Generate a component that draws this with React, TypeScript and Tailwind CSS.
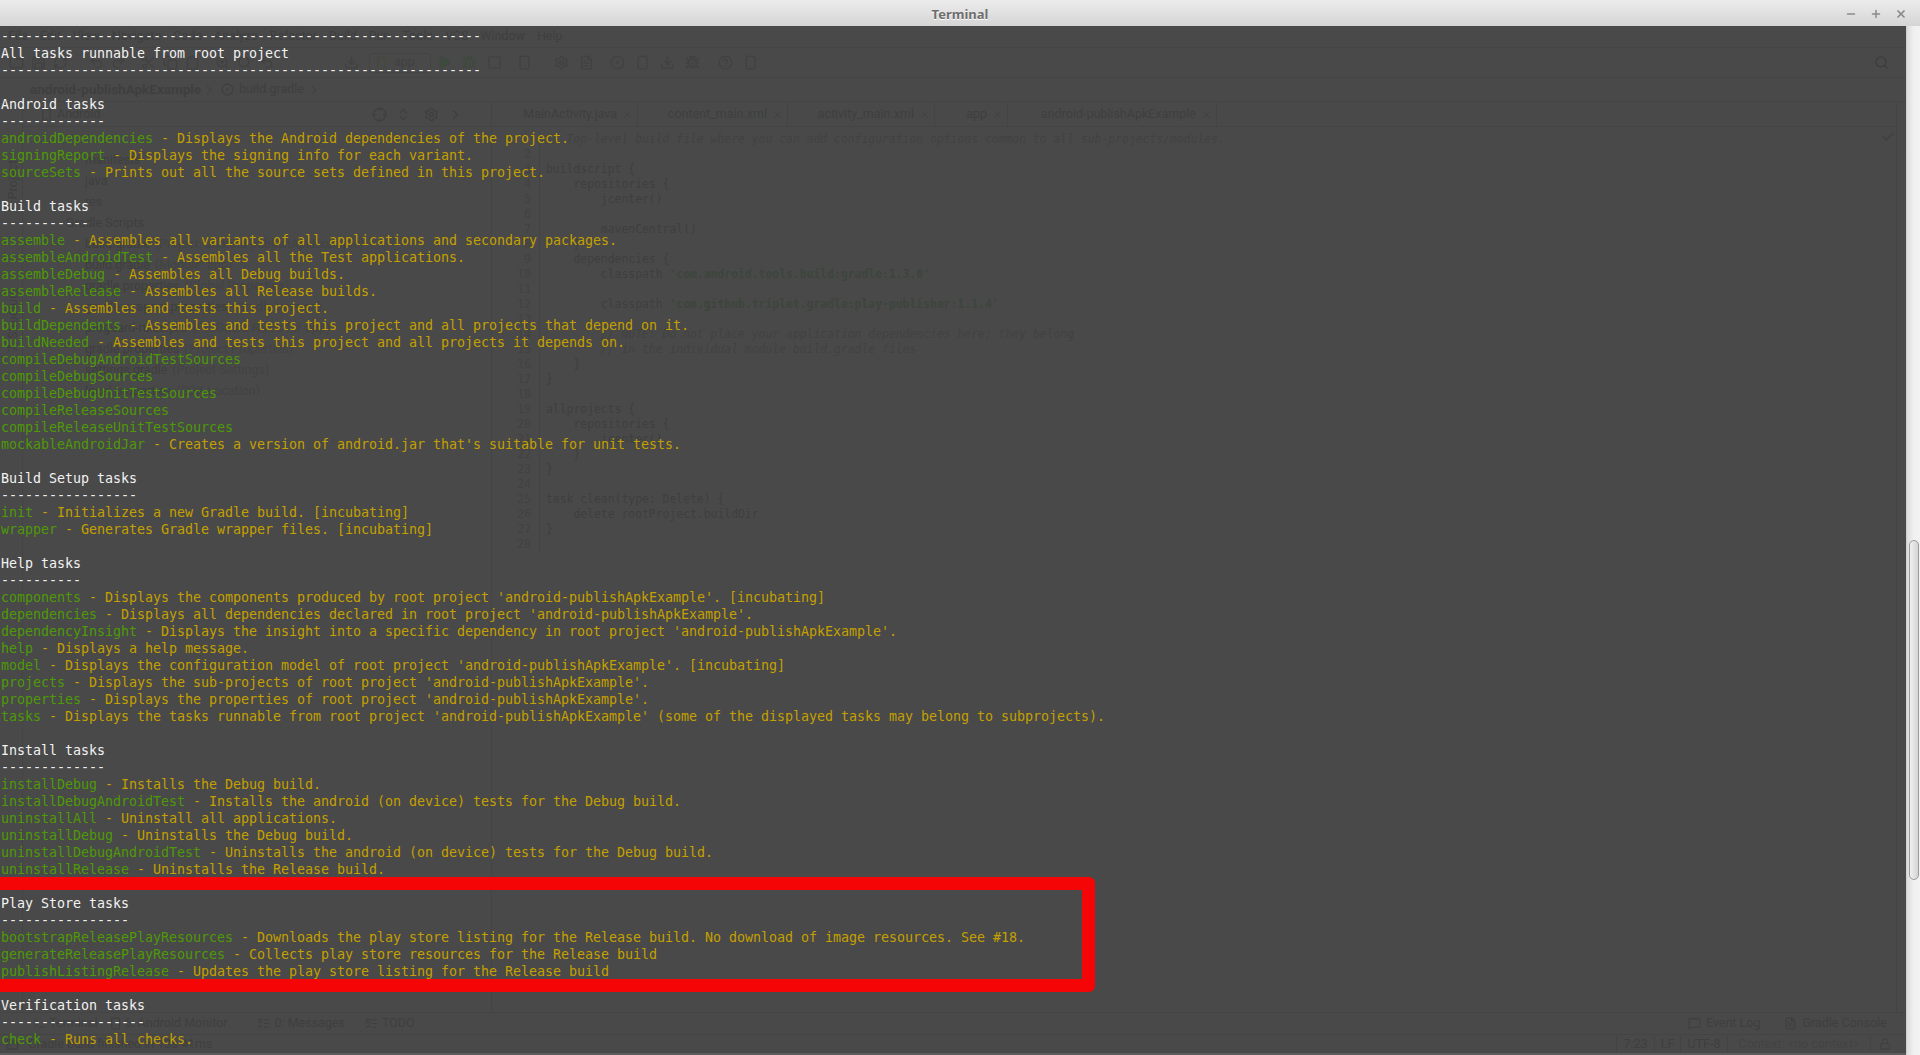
import { Minus, Plus, X, Search, Check, Folder, Save, RefreshCw, Undo2, Redo2, Scissors, Copy, Clipboard, ZoomIn, Play, Bug, Smartphone, Download, HelpCircle, Settings, Crosshair, ChevronsUpDown, ChevronRight, FileText, MessageSquare, Lock, Terminal as TerminalIcon, FolderOpen, CircleDot, ListTodo, Square } from "lucide-react";

type Line = { head?: string; task?: string; desc?: string };

const dashes = (n: number) => "-".repeat(n);

const section = (title: string, tasks: [string, string?][]): Line[] => [
  { head: title },
  { head: dashes(title.length) },
  ...tasks.map(([task, desc]) => ({ task, desc })),
  {},
];

const lines: Line[] = [
  { head: dashes(60) },
  { head: "All tasks runnable from root project" },
  { head: dashes(60) },
  {},
  ...section("Android tasks", [
    ["androidDependencies", "Displays the Android dependencies of the project."],
    ["signingReport", "Displays the signing info for each variant."],
    ["sourceSets", "Prints out all the source sets defined in this project."],
  ]),
  ...section("Build tasks", [
    ["assemble", "Assembles all variants of all applications and secondary packages."],
    ["assembleAndroidTest", "Assembles all the Test applications."],
    ["assembleDebug", "Assembles all Debug builds."],
    ["assembleRelease", "Assembles all Release builds."],
    ["build", "Assembles and tests this project."],
    ["buildDependents", "Assembles and tests this project and all projects that depend on it."],
    ["buildNeeded", "Assembles and tests this project and all projects it depends on."],
    ["compileDebugAndroidTestSources"],
    ["compileDebugSources"],
    ["compileDebugUnitTestSources"],
    ["compileReleaseSources"],
    ["compileReleaseUnitTestSources"],
    ["mockableAndroidJar", "Creates a version of android.jar that's suitable for unit tests."],
  ]),
  ...section("Build Setup tasks", [
    ["init", "Initializes a new Gradle build. [incubating]"],
    ["wrapper", "Generates Gradle wrapper files. [incubating]"],
  ]),
  ...section("Help tasks", [
    ["components", "Displays the components produced by root project 'android-publishApkExample'. [incubating]"],
    ["dependencies", "Displays all dependencies declared in root project 'android-publishApkExample'."],
    ["dependencyInsight", "Displays the insight into a specific dependency in root project 'android-publishApkExample'."],
    ["help", "Displays a help message."],
    ["model", "Displays the configuration model of root project 'android-publishApkExample'. [incubating]"],
    ["projects", "Displays the sub-projects of root project 'android-publishApkExample'."],
    ["properties", "Displays the properties of root project 'android-publishApkExample'."],
    ["tasks", "Displays the tasks runnable from root project 'android-publishApkExample' (some of the displayed tasks may belong to subprojects)."],
  ]),
  ...section("Install tasks", [
    ["installDebug", "Installs the Debug build."],
    ["installDebugAndroidTest", "Installs the android (on device) tests for the Debug build."],
    ["uninstallAll", "Uninstall all applications."],
    ["uninstallDebug", "Uninstalls the Debug build."],
    ["uninstallDebugAndroidTest", "Uninstalls the android (on device) tests for the Debug build."],
    ["uninstallRelease", "Uninstalls the Release build."],
  ]),
  ...section("Play Store tasks", [
    ["bootstrapReleasePlayResources", "Downloads the play store listing for the Release build. No download of image resources. See #18."],
    ["generateReleasePlayResources", "Collects play store resources for the Release build"],
    ["publishListingRelease", "Updates the play store listing for the Release build"],
  ]),
  ...section("Verification tasks", [["check", "Runs all checks."]]),
];

const menuItems = ["File", "Edit", "View", "Navigate", "Code", "Analyze", "Refactor", "Build", "Run", "Tools", "VCS", "Window", "Help"];

const projectTree: [string, string?, boolean?][] = [
  ["manifests"],
  ["java"],
  ["res"],
  ["Gradle Scripts", undefined, true],
  ["build.gradle", "(Project: android-publishApkExample)"],
  ["build.gradle", "(Module: app)"],
  ["gradle.properties", "(Global Properties)"],
  ["gradle-wrapper.properties", "(Gradle Version)"],
  ["proguard-rules.pro", "(ProGuard Rules for app)"],
  ["gradle.properties", "(Project Properties)"],
  ["settings.gradle", "(Project Settings)"],
  ["local.properties", "(SDK Location)"],
];

const tabs = [
  { name: "MainActivity.java", width: "w-[146px]" },
  { name: "content_main.xml", width: "w-[150px]" },
  { name: "activity_main.xml", width: "w-[147px]" },
  { name: "app", width: "w-[73px]" },
  { name: "android-publishApkExample", width: "w-[209px]" },
];

const code = [
  "// Top-level build file where you can add configuration options common to all sub-projects/modules.",
  "",
  "buildscript {",
  "    repositories {",
  "        jcenter()",
  "",
  "        mavenCentral()",
  "    }",
  "    dependencies {",
  "        classpath 'com.android.tools.build:gradle:1.3.0'",
  "",
  "        classpath 'com.github.triplet.gradle:play-publisher:1.1.4'",
  "",
  "        // NOTE: Do not place your application dependencies here; they belong",
  "        // in the individual module build.gradle files",
  "    }",
  "}",
  "",
  "allprojects {",
  "    repositories {",
  "        jcenter()",
  "    }",
  "}",
  "",
  "task clean(type: Delete) {",
  "    delete rootProject.buildDir",
  "}",
  "",
];

function CodeLine({ text }: { text: string }) {
  if (text.trim().startsWith("//")) return <span className="italic text-[#424242]">{text}</span>;
  const quote = text.indexOf("'");
  if (quote >= 0) {
    return (
      <>
        {text.slice(0, quote)}
        <span className="font-bold text-[#3d453d]">{text.slice(quote)}</span>
      </>
    );
  }
  return <>{text}</>;
}

// the IDE window showing through the translucent terminal
function IdeBehind() {
  return (
    <div className="absolute inset-0 top-[26px] flex flex-col text-[#3f3f3f] [font-family:'Roboto','Noto_Sans',sans-serif] text-[12.5px]">
      <div className="flex h-[22px] items-center gap-[12px] border-b border-[#444444] pl-[8px]">
        {menuItems.map((item) => (
          <span key={item}>{item}</span>
        ))}
      </div>
      <div className="flex h-[30px] items-center border-b border-[#444444] pl-[9px] text-[#414141]">
        <div className="flex items-center gap-[7px]">
          <Folder size={15} />
          <Save size={15} />
          <RefreshCw size={15} />
          <Undo2 size={15} className="ml-[14px]" />
          <Redo2 size={15} />
          <Scissors size={15} className="ml-[8px]" />
          <Copy size={15} />
          <Clipboard size={15} />
          <ZoomIn size={15} className="ml-[8px]" />
          <Search size={15} />
          <Undo2 size={15} />
        </div>
        <Download size={15} className="ml-[70px]" />
        <div className="ml-[10px] flex h-[20px] w-[62px] items-center gap-[6px] rounded-[3px] border border-[#444444] px-[5px]">
          <Smartphone size={13} className="text-[#444a3c]" />
          <span>app</span>
        </div>
        <div className="ml-[6px] flex items-center gap-[10px]">
          <Play size={15} className="fill-[#3e4a3e] text-[#3e4a3e]" />
          <Bug size={15} className="text-[#3e4a3e]" />
          <Square size={15} />
          <Smartphone size={15} className="ml-[5px]" />
          <Settings size={15} className="ml-[12px]" />
          <FileText size={15} />
          <CircleDot size={15} className="ml-[6px]" />
          <Smartphone size={15} />
          <Download size={15} />
          <Bug size={15} />
          <HelpCircle size={15} className="ml-[8px]" />
          <Smartphone size={15} />
        </div>
        <Search size={15} className="ml-auto mr-[31px] text-[#3c3c3c]" />
      </div>
      <div className="flex h-[24px] items-center border-b border-[#444444] pl-[30px]">
        <span className="text-[13.5px] font-bold">android-publishApkExample</span>
        <ChevronRight size={16} className="text-[#444444]" />
        <CircleDot size={13} className="ml-[4px]" />
        <span className="ml-[5px]">build.gradle</span>
        <ChevronRight size={16} className="ml-[2px] text-[#444444]" />
      </div>
      <div className="flex min-h-0 flex-1">
        <div className="relative w-[23px] shrink-0 border-r border-[#444444]">
          <div className="absolute left-[4px] top-[58px] [writing-mode:vertical-rl] rotate-180">1: Project</div>
          <div className="absolute left-[4px] top-[186px] [writing-mode:vertical-rl] rotate-180">7: Structure</div>
        </div>
        <div className="flex w-[468px] shrink-0 flex-col">
          <div className="flex h-[25px] items-center border-b border-[#444444] pl-[17px]">
            <Smartphone size={13} />
            <span className="ml-[4px]">Android</span>
            <div className="ml-[272px] flex items-center gap-[9px]">
              <Crosshair size={15} />
              <ChevronsUpDown size={15} />
              <Settings size={15} className="ml-[4px]" />
              <ChevronRight size={15} />
            </div>
          </div>
          <div className="flex flex-col pt-[23px]">
            {projectTree.map(([name, note, top]) => (
              <div key={name + note} className={`flex h-[21px] items-center gap-[5px] ${top ? "pl-[43px]" : "pl-[62px]"}`}>
                <span>{name}</span>
                {note && <span className="text-[#434343]">{note}</span>}
              </div>
            ))}
          </div>
        </div>
        <div className="flex min-w-0 flex-1 flex-col border-l border-[#444444]">
          <div className="flex h-[25px] items-center border-b border-[#444444]">
            {tabs.map((tab) => (
              <div key={tab.name} className={`flex h-full items-center justify-end gap-[5px] border-r border-[#444444] pr-[4px] ${tab.width}`}>
                <span>{tab.name}</span>
                <X size={11} />
              </div>
            ))}
          </div>
          <div className="flex pt-[5px] [font-family:'DejaVu_Sans_Mono',monospace] text-[11.4px] leading-[15px]">
            <div className="flex w-[48px] shrink-0 flex-col items-end border-r border-[#444444] pr-[8px] text-[#424242]">
              {code.map((_, i) => (
                <span key={i} className="h-[15px]">{i === 0 ? "" : i + 1}</span>
              ))}
            </div>
            <div className="flex flex-col whitespace-pre pl-[6px]">
              {code.map((text, i) => (
                <div key={i} className="h-[15px]">
                  <CodeLine text={text} />
                </div>
              ))}
            </div>
            <Check size={14} strokeWidth={3} className="absolute right-[25px] top-[104px] text-[#414141]" />
          </div>
        </div>
        <div className="relative w-[24px] shrink-0 border-l border-[#444444]">
          <div className="absolute left-[3px] top-[16px] font-bold [writing-mode:vertical-rl]">Gradle</div>
          <div className="absolute left-[3px] bottom-[12px] [writing-mode:vertical-rl]">Android Model</div>
        </div>
      </div>
      <div className="flex h-[23px] items-center border-y border-[#444444] pl-[33px]">
        <TerminalIcon size={13} />
        <span className="ml-[3px]">Terminal</span>
        <Smartphone size={13} className="ml-[12px]" />
        <span className="ml-[2px]">6: Android Monitor</span>
        <ListTodo size={13} className="ml-[30px]" />
        <span className="ml-[4px]">0: Messages</span>
        <ListTodo size={13} className="ml-[20px]" />
        <span className="ml-[4px]">TODO</span>
        <MessageSquare size={13} className="ml-auto" />
        <span className="ml-[5px]">Event Log</span>
        <FileText size={13} className="ml-[24px]" />
        <span className="ml-[5px] mr-[33px]">Gradle Console</span>
      </div>
      <div className="flex h-[20px] items-center border-b-2 border-[#5c5c5c] pl-[6px]">
        <FolderOpen size={13} />
        <span className="ml-[9px]">Gradle build finished in 13s 41ms</span>
        <div className="ml-auto flex h-full items-center">
          <span className="flex h-full w-[38px] items-center justify-center border-l border-[#444444]">7:23</span>
          <span className="flex h-full w-[26px] items-center justify-center border-l border-[#444444]">LF</span>
          <span className="flex h-full w-[47px] items-center justify-center border-l border-[#444444]">UTF-8</span>
          <span className="flex h-full w-[143px] items-center justify-center border-l border-[#444444] text-[#434343]">Context: &lt;no context&gt;</span>
          <span className="flex h-full w-[50px] items-center border-l border-[#444444] pl-[8px]">
            <Lock size={12} />
          </span>
        </div>
      </div>
    </div>
  );
}

function TitleBar() {
  return (
    <div className="relative z-10 flex h-[26px] shrink-0 items-center justify-center bg-gradient-to-b from-[#ececec] to-[#d5d5d5] pt-[3px]">
      <span className="text-[13px] font-bold text-[#6e6e6e] [font-family:'Noto_Sans',sans-serif] [text-shadow:0_1px_0_#ffffff]">Terminal</span>
      <div className="absolute right-[13px] top-[8px] flex items-center gap-[13px] text-[#8a8a8a]">
        <Minus size={12} strokeWidth={3} />
        <Plus size={12} strokeWidth={3} />
        <X size={12} strokeWidth={3.5} />
      </div>
    </div>
  );
}

function Scrollbar() {
  return (
    <div className="absolute bottom-0 right-0 top-[26px] w-[14px] border-l border-[#cfcfcf] bg-gradient-to-r from-[#dcdcdc] via-[#f0f0f0] to-[#f2f2f2]">
      <div className="absolute left-[2px] top-[514px] h-[340px] w-[10px] rounded-[5px] border border-[#9a9a9a] bg-gradient-to-r from-[#f0f0f0] to-[#d4d4d4]" />
    </div>
  );
}

export default function App() {
  return (
    <div className="relative flex h-[1055px] w-[1920px] flex-col overflow-hidden bg-[#494949]">
      <TitleBar />
      <IdeBehind />
      <div className="relative whitespace-pre pl-px pt-[2px] text-[13.33px] tracking-[-0.025px] leading-[17px] [font-family:'DejaVu_Sans_Mono',monospace]">
        {lines.map((line, i) => (
          <div key={i} className="h-[17px]">
            {line.head && <span className="text-[#f2f2f2]">{line.head}</span>}
            {line.task && <span className="text-[#4e9a06]">{line.task}</span>}
            {line.desc && <span className="text-[#c4a000]"> - {line.desc}</span>}
          </div>
        ))}
      </div>
      <div className="absolute left-[-20px] top-[877px] h-[115px] w-[1115px] rounded-[6px] border-[13px] border-[#f50505]" />
      <Scrollbar />
    </div>
  );
}
